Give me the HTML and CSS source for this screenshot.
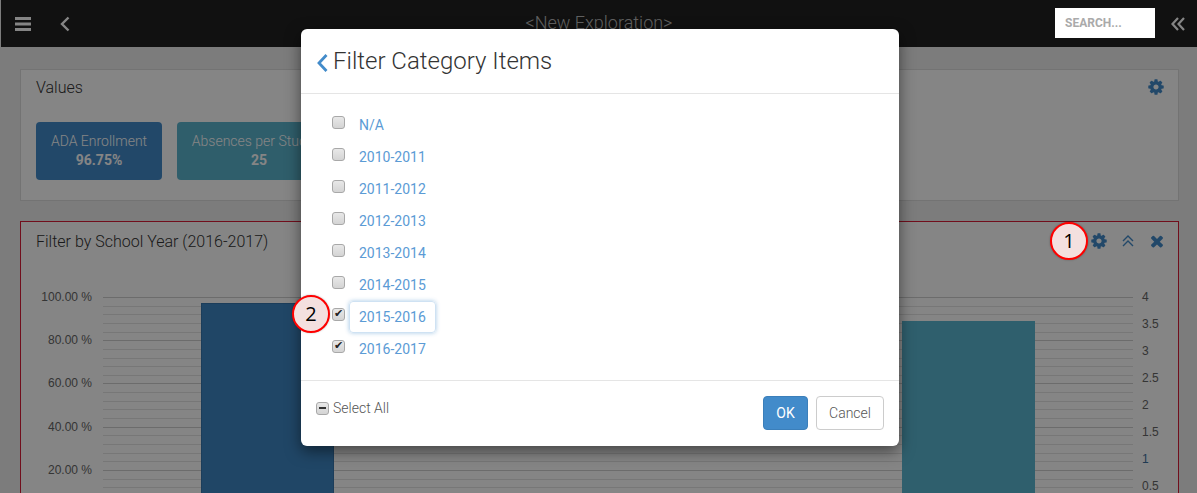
FILE: index.html
```html
<!DOCTYPE html>
<html lang="en">
<head>
<meta charset="utf-8">
<title>New Exploration</title>
<link rel="stylesheet" href="styles.css">
</head>
<body>
<header class="nav">
  <div class="nav-left">
    <svg class="nav-icon" viewBox="0 0 16 14" width="16" height="14"><path d="M0 0h16v3H0zM0 5.500h16v3H0zM0 11h16v3H0z"/></svg>
    <svg class="nav-back" viewBox="0 0 10 16" width="10" height="16"><path d="M8.500 1.500 2 8l6.500 6.500"/></svg>
  </div>
  <div class="nav-title">&lt;New Exploration&gt;</div>
  <div class="nav-right">
    <input class="search" type="text" placeholder="SEARCH...">
    <svg class="nav-collapse" viewBox="0 0 14 14" width="14" height="14"><path d="M7 1 1.500 7 7 13M13 1 7.500 7 13 13"/></svg>
  </div>
</header>

<main class="page">
  <section class="panel values">
    <div class="panel-head">
      <h2 class="panel-title">Values</h2>
      <div class="tools">
        <svg class="tool" viewBox="0 0 1792 1792" width="18" height="18"><use href="#cog"/></svg>
      </div>
    </div>
    <div class="tiles">
      <div class="tile tile-blue"><span>ADA Enrollment</span><b>96.75%</b></div>
      <div class="tile tile-teal"><span>Absences per Student</span><b>25</b></div>
    </div>
  </section>

  <section class="panel chart-panel">
    <div class="panel-head">
      <h2 class="panel-title">Filter by School Year (2016-2017)</h2>
      <div class="tools">
        <svg class="tool" viewBox="0 0 1792 1792" width="18" height="18"><path id="cog" d="M1152 896q0-106-75-181t-181-75-181 75-75 181 75 181 181 75 181-75 75-181zm512-109v222q0 12-8 23t-20 13l-185 28q-19 54-39 91 35 50 107 138 10 12 10 25t-9 23q-27 37-99 108t-94 71q-12 0-26-9l-138-108q-44 23-91 38-16 136-29 186-7 28-36 28h-222q-14 0-24.500-8.500t-11.500-21.500l-28-184q-49-16-90-37l-141 107q-10 9-25 9-14 0-25-11-126-114-165-168-7-10-7-23 0-12 8-23 15-21 51-66.500t54-70.500q-27-50-41-99l-183-27q-13-2-21-12.500t-8-23.500v-222q0-12 8-23t19-13l186-28q14-46 39-92-40-57-107-138-10-12-10-24 0-10 9-23 26-36 98.500-107.500t94.500-71.500q13 0 26 10l138 107q44-23 91-38 16-136 29-186 7-28 36-28h222q14 0 24.500 8.500t11.500 21.500l28 184q49 16 90 37l142-107q9-9 24-9 13 0 25 10 129 119 165 170 7 8 7 22 0 12-8 23-15 21-51 66.500t-54 70.500q26 50 41 98l183 28q13 2 21 12.500t8 23.500z"/></svg>
        <svg class="tool-line" viewBox="0 0 12 12" width="12" height="12"><path d="M1 6 6 1l5 5M1 11l5-5 5 5"/></svg>
        <svg class="tool" viewBox="0 0 1792 1792" width="18" height="18"><path d="M1490 1322q0 40-28 68l-136 136q-28 28-68 28t-68-28l-294-294-294 294q-28 28-68 28t-68-28l-136-136q-28-28-28-68t28-68l294-294-294-294q-28-28-28-68t28-68l136-136q28-28 68-28t68 28l294 294 294-294q28-28 68-28t68 28l136 136q28 28 28 68t-28 68l-294 294 294 294q28 28 28 68z"/></svg>
      </div>
    </div>
    <svg class="chart" viewBox="21 280 1157 213" width="1157" height="213">
      <g class="minor">
        <path d="M103 306h1030M103 314h1030M103 323h1030M103 332h1030M103 349h1030M103 358h1030M103 366h1030M103 375h1030M103 392h1030M103 401h1030M103 409h1030M103 418h1030M103 435h1030M103 444h1030M103 453h1030M103 461h1030M103 479h1030M103 487h1030"/>
      </g>
      <g class="major">
        <path d="M103 297h1030M103 340h1030M103 383h1030M103 427h1030M103 470h1030"/>
      </g>
      <rect class="bar-blue" x="201.500" y="303.500" width="132" height="200"/>
      <rect class="bar-teal" x="902" y="321" width="133" height="180"/>
      <g class="axis-left">
        <text x="92" y="301">100.00 %</text>
        <text x="92" y="344">80.00 %</text>
        <text x="92" y="387">60.00 %</text>
        <text x="92" y="431">40.00 %</text>
        <text x="92" y="474">20.00 %</text>
      </g>
      <g class="axis-right">
        <text x="1142" y="301">4</text>
        <text x="1142" y="328">3.5</text>
        <text x="1142" y="355">3</text>
        <text x="1142" y="382">2.5</text>
        <text x="1142" y="409">2</text>
        <text x="1142" y="436">1.5</text>
        <text class="axis-accent" x="1142" y="463">1</text>
        <text x="1142" y="490">0.5</text>
      </g>
    </svg>
  </section>
</main>

<div class="backdrop"></div>

<div class="modal">
  <div class="modal-head">
    <svg class="modal-back" viewBox="0 0 12 20" width="12" height="20"><path d="M10.500 2 3 10l7.500 8"/></svg>
    <h1 class="modal-title">Filter Category Items</h1>
  </div>
  <ul class="modal-list">
    <li class="row"><input class="check" type="checkbox"><a class="item">N/A</a></li>
    <li class="row"><input class="check" type="checkbox"><a class="item">2010-2011</a></li>
    <li class="row"><input class="check" type="checkbox"><a class="item">2011-2012</a></li>
    <li class="row"><input class="check" type="checkbox"><a class="item">2012-2013</a></li>
    <li class="row"><input class="check" type="checkbox"><a class="item">2013-2014</a></li>
    <li class="row"><input class="check" type="checkbox"><a class="item">2014-2015</a></li>
    <li class="row"><input class="check" type="checkbox" checked><a class="item item-focus">2015-2016</a></li>
    <li class="row"><input class="check" type="checkbox" checked><a class="item">2016-2017</a></li>
  </ul>
  <div class="modal-foot">
    <label class="select-all"><span class="check check-mixed"></span>Select All</label>
    <div class="buttons">
      <button class="btn btn-primary" type="button">OK</button>
      <button class="btn btn-default" type="button">Cancel</button>
    </div>
  </div>
</div>

<div class="callout callout-one">1</div>
<div class="callout callout-two">2</div>
</body>
</html>
```
FILE: styles.css
```css
* { box-sizing: border-box; }
html, body { height: 100%; }
body {
  margin: 0;
  height: 493px;
  overflow: hidden;
  background: #eeeeee;
  font-family: Roboto, "Liberation Sans", sans-serif;
  font-weight: 300;
  color: #555;
  position: relative;
}

/* top bar */
.nav {
  height: 47px;
  margin-left: 1px;
  background: #222;
  display: flex;
  align-items: center;
  justify-content: space-between;
  position: relative;
}
.nav-left { display: flex; align-items: center; gap: 29px; padding-left: 14px; width: 300px; }
.nav-icon { fill: #fff; }
.nav-back { fill: none; stroke: #fff; stroke-width: 2.4; }
.nav-title { font-size: 18px; color: #bbb; flex: 1; text-align: center; padding-bottom: 2px; }
.nav-right { width: 300px; display: flex; justify-content: flex-end; align-items: center; gap: 16px; padding-right: 12px; }
.search {
  width: 100px;
  height: 30px;
  border: 0;
  padding: 0 10px;
  background: #fff;
  font: 700 12px Roboto, sans-serif;
  position: relative;
  z-index: 20;
  margin-top: -1px;
  outline: none;
}
.search::placeholder { color: #aaa; opacity: 1; }
.nav-collapse { fill: none; stroke: #fff; stroke-width: 2.2; }

/* page */
.page { padding: 22px 18px 0 20px; display: flex; flex-direction: column; gap: 20px; }
.panel { background: #fff; border: 1px solid #ddd; }
.panel-head { display: flex; justify-content: space-between; align-items: center; padding: 0 12px 0 15px; }
.panel-title { margin: 0; font-size: 16px; font-weight: 300; color: #333; }
.values { height: 132px; }
.values .panel-head { height: 34px; padding-right: 13px; }
.tools { display: flex; align-items: center; gap: 14px; }
.tool { fill: #428bca; display: block; }
.tool-line { fill: none; stroke: #428bca; stroke-width: 1.4; display: block; }

.tiles { display: flex; gap: 15px; padding: 18px 15px 0; }
.tile {
  height: 58px;
  border-radius: 4px;
  color: #fff;
  font-size: 14px;
  display: flex;
  flex-direction: column;
  align-items: center;
  justify-content: center;
  line-height: 19px;
}
.tile b { font-weight: 700; }
.tile-blue { width: 126px; background: #428bca; }
.tile-teal { width: 164px; background: #5bb4ce; }

.chart-panel { border-color: #d81c36; height: 300px; flex: none; }
.chart-panel .panel-head { height: 38px; }
.chart { display: block; margin-top: 20px; }
.minor path { stroke: #e4e4e4; stroke-width: 1; shape-rendering: crispEdges; }
.major path { stroke: #d0d0d0; stroke-width: 1; shape-rendering: crispEdges; }
.bar-blue { fill: #3f86c4; stroke: #3776ad; }
.bar-teal { fill: #5bb7d2; }
.axis-left text, .axis-right text { font: 400 12px "Liberation Sans", Arial, sans-serif; fill: #666; }
.axis-left text { text-anchor: end; }
.axis-accent { fill: #3d6f9e !important; }

/* modal */
.backdrop { position: absolute; inset: 0; background: rgba(0, 0, 0, .48); z-index: 10; }
.modal {
  position: absolute;
  left: 301px;
  top: 29px;
  width: 598px;
  height: 417px;
  background: #fff;
  border-radius: 6px;
  box-shadow: 0 5px 15px rgba(0, 0, 0, .5);
  z-index: 20;
  display: flex;
  flex-direction: column;
}
.modal-head {
  height: 65px;
  border-bottom: 1px solid #e5e5e5;
  display: flex;
  align-items: center;
  gap: 5px;
  padding-left: 15px;
}
.modal-back { fill: none; stroke: #428bca; stroke-width: 2.800; margin-top: 3px; }
.modal-title { margin: 0; font-size: 24px; font-weight: 300; color: #333; }
.modal-list { list-style: none; margin: 0; padding: 15px 0 15px 31px; flex: 1; }
.row { height: 32px; display: flex; align-items: flex-start; gap: 4px; }
.check {
  appearance: none;
  flex: none;
  width: 13px;
  height: 13px;
  margin: 7px 0 0;
  border: 1px solid #a8a8a8;
  border-radius: 3px;
  background: linear-gradient(#e8e8e8, #d4d4d4);
  position: relative;
  display: block;
}
.check:checked::after {
  content: "\2714";
  position: absolute;
  left: 1px;
  top: -1px;
  font: 11px/12px "DejaVu Sans", sans-serif;
  color: #222;
}
.check-mixed { margin: 0; }
.check-mixed::after {
  content: "";
  position: absolute;
  left: 2px;
  right: 2px;
  top: 4px;
  height: 2px;
  background: #333;
}
.item {
  height: 32px;
  padding: 0 9px;
  border: 1px solid transparent;
  border-radius: 4px;
  font-size: 14px;
  line-height: 30px;
  color: #5b9bd5;
  font-weight: 400;
}
.item-focus { border-color: #cfe2f3; box-shadow: 0 0 4px rgba(66, 139, 202, .45); }
.modal-foot {
  height: 66px;
  border-top: 1px solid #e5e5e5;
  display: flex;
  justify-content: space-between;
  padding: 15px;
}
.select-all { display: flex; align-items: center; gap: 4px; font-size: 14px; color: #555; height: 24px; }
.buttons { display: flex; gap: 8px; }
.btn {
  height: 34px;
  border-radius: 4px;
  font: 400 14px Roboto, sans-serif;
  padding: 0;
  border: 1px solid;
}
.btn-primary { width: 45px; background: #428bca; border-color: #3b7fba; color: #fff; }
.btn-default { width: 68px; background: #fff; border-color: #ccc; color: #555; font-weight: 300; }

/* numbered annotations */
.callout {
  position: absolute;
  width: 38px;
  height: 38px;
  border-radius: 50%;
  border: 2px solid #f00;
  background: #f4e0df;
  box-shadow: 0 0 2px rgba(0, 0, 0, .3);
  color: #000;
  font: 400 20px/34px "Open Sans", sans-serif;
  text-align: center;
  z-index: 30;
}
.callout-one { left: 1050px; top: 222px; }
.callout-two { left: 292px; top: 295px; }
```
